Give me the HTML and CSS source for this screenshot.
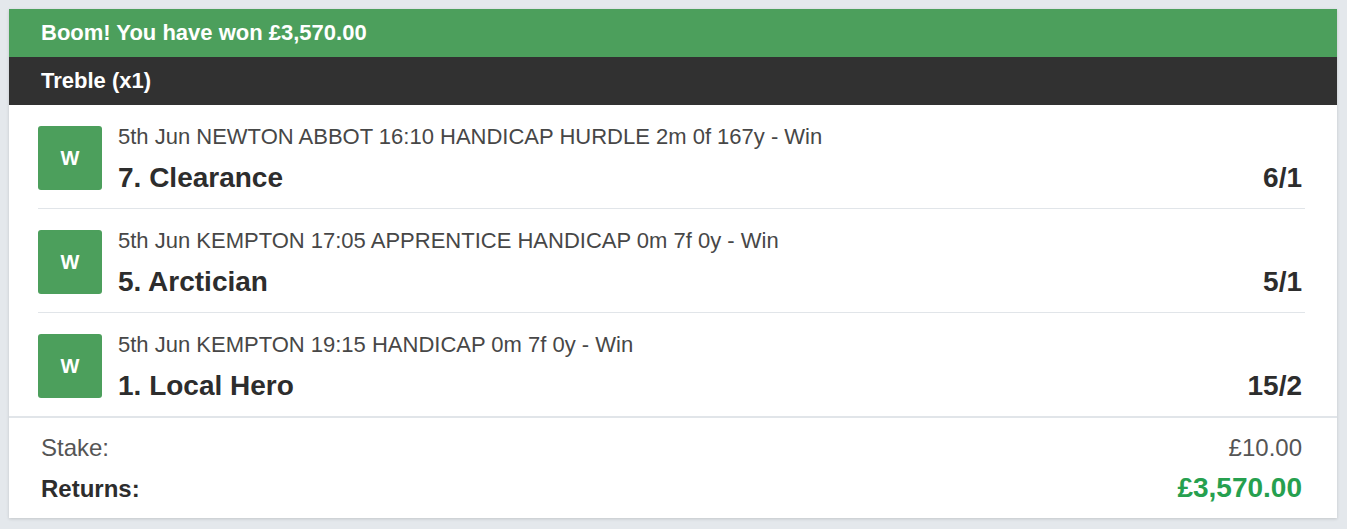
FILE: index.html
```html
<html>
<head>
  <link rel="stylesheet" href="styles.css">
</head>
<body>
  <div id="slip">
    <div id="banner">Boom! You have won £3,570.00</div>
    <div id="bet-type">Treble (x1)</div>
    <div id="legs">
      <div class="leg">
        <div class="result">W</div>
        <div class="leg-info">
          <div class="race">5th Jun NEWTON ABBOT 16:10 HANDICAP HURDLE 2m 0f 167y - Win</div>
          <div class="selection">
            <span class="runner">7. Clearance</span>
            <span class="odds">6/1</span>
          </div>
        </div>
      </div>
      <div class="leg">
        <div class="result">W</div>
        <div class="leg-info">
          <div class="race">5th Jun KEMPTON 17:05 APPRENTICE HANDICAP 0m 7f 0y - Win</div>
          <div class="selection">
            <span class="runner">5. Arctician</span>
            <span class="odds">5/1</span>
          </div>
        </div>
      </div>
      <div class="leg">
        <div class="result">W</div>
        <div class="leg-info">
          <div class="race">5th Jun KEMPTON 19:15 HANDICAP 0m 7f 0y - Win</div>
          <div class="selection">
            <span class="runner">1. Local Hero</span>
            <span class="odds">15/2</span>
          </div>
        </div>
      </div>
    </div>
    <div id="totals">
      <div class="total-row">
        <span class="label">Stake:</span>
        <span class="amount">£10.00</span>
      </div>
      <div class="total-row returns">
        <span class="label">Returns:</span>
        <span class="amount">£3,570.00</span>
      </div>
    </div>
  </div>
</body>
</html>
```

FILE: styles.css
```css
body {
  font-family: "Liberation Sans", Arial, sans-serif;
  margin: 0;
  padding: 9px 10px 0 9px;
  background-color: #e4e8ec;
}

#slip {
  background-color: white;
  box-shadow: 0 1px 3px rgba(0, 0, 0, 0.15);
}

#banner,
#bet-type {
  height: 48px;
  line-height: 48px;
  padding: 0 32px;
  font-size: 22px;
  font-weight: bold;
  color: white;
}

#banner {
  background-color: #4c9f5c;
}

#bet-type {
  background-color: #313131;
}

#legs {
  padding: 0 32px 0 29px;
}

.leg {
  display: flex;
  align-items: flex-start;
  gap: 16px;
  padding: 21px 0 14px;
  border-bottom: 1px solid #e1e5e9;
}

.leg:last-child {
  border-bottom: none;
}

.result {
  width: 64px;
  height: 64px;
  flex-shrink: 0;
  border-radius: 3px;
  background-color: #4c9f5c;
  color: white;
  font-size: 20px;
  font-weight: bold;
  line-height: 64px;
  text-align: center;
}

.leg-info {
  flex-grow: 1;
}

.race {
  font-size: 22px;
  line-height: 22px;
  color: #474747;
  margin-bottom: 14px;
}

.selection {
  display: flex;
  justify-content: space-between;
  padding-right: 3px;
  font-size: 28px;
  line-height: 32px;
  font-weight: bold;
  color: #2d2d2d;
}

#totals {
  border-top: 2px solid #e1e5e9;
  padding: 10px 35px 10px 32px;
}

.total-row {
  display: flex;
  justify-content: space-between;
  align-items: baseline;
  height: 40px;
  line-height: 40px;
  font-size: 24px;
  color: #555;
}

.returns {
  font-weight: bold;
  color: #2d2d2d;
}

.returns .amount {
  font-size: 28px;
  color: #26a04f;
}
```
